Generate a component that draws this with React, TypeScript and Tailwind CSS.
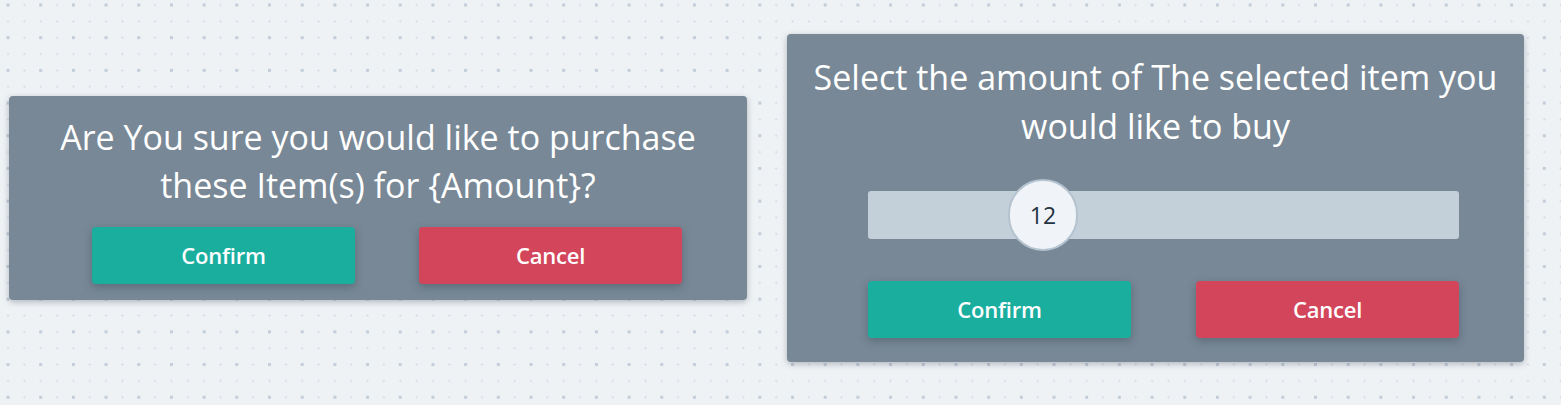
import React from "react";

function ActionButtons() {
  return (
    <div className="flex justify-between">
      <button className="w-[263px] h-[57px] rounded-[4px] bg-[#1aae9f] text-white text-[22px] font-semibold tracking-[-0.2px] shadow-[0_3px_8px_rgba(40,55,70,0.35)]">
        Confirm
      </button>
      <button className="w-[263px] h-[57px] rounded-[4px] bg-[#d3455b] text-white text-[22px] font-semibold tracking-[-0.2px] shadow-[0_3px_8px_rgba(40,55,70,0.35)]">
        Cancel
      </button>
    </div>
  );
}

function PurchaseCard() {
  return (
    <div className="w-[738px] rounded-[4px] bg-[#788896] shadow-[0_2px_6px_rgba(60,75,90,0.35)] pt-[17px] pb-[16px]">
      <p className="mx-auto max-w-[680px] text-center text-white text-[34px] leading-[48px]">
        Are You sure you would like to purchase these Item(s) for {"{Amount}"}?
      </p>
      <div className="mt-[18px] pl-[83px] pr-[65px]">
        <ActionButtons />
      </div>
    </div>
  );
}

function AmountCard({ amount }: { amount: number }) {
  return (
    <div className="w-[737px] rounded-[4px] bg-[#788896] shadow-[0_2px_6px_rgba(60,75,90,0.35)] pt-[19px] pb-[24px]">
      <p className="text-center text-white text-[34px] leading-[49px] px-[10px]">
        Select the amount of The selected item you would like to buy
      </p>
      <div className="mt-[40px] pl-[81px] pr-[65px]">
        <div className="relative h-[48px] rounded-[3px] bg-[#c3cfd9]">
          <div className="absolute left-[140px] top-[-12px] w-[70px] h-[72px] rounded-full bg-[#f0f4f8] border-2 border-[#b4c3cf] flex items-center justify-center text-[23px] text-[#243342]">
            {amount}
          </div>
        </div>
      </div>
      <div className="mt-[42px] pl-[81px] pr-[65px]">
        <ActionButtons />
      </div>
    </div>
  );
}

export default function App() {
  return (
    <div
      className="w-[1561px] h-[405px] flex items-center gap-[40px] pl-[9px] pb-[9px] bg-[#eff2f5] bg-[radial-gradient(circle,#c3ceda_1.4px,transparent_1.6px),radial-gradient(circle,#d3dbe4_0.9px,transparent_1.1px)] bg-size-[32.7px_32.7px,16.35px_16.35px] bg-position-[-8.35px_-11.35px,-0.17px_-3.17px] overflow-hidden"
      style={{ fontFamily: "'Open Sans', 'Liberation Sans', sans-serif" }}
    >
      <PurchaseCard />
      <AmountCard amount={12} />
    </div>
  );
}
